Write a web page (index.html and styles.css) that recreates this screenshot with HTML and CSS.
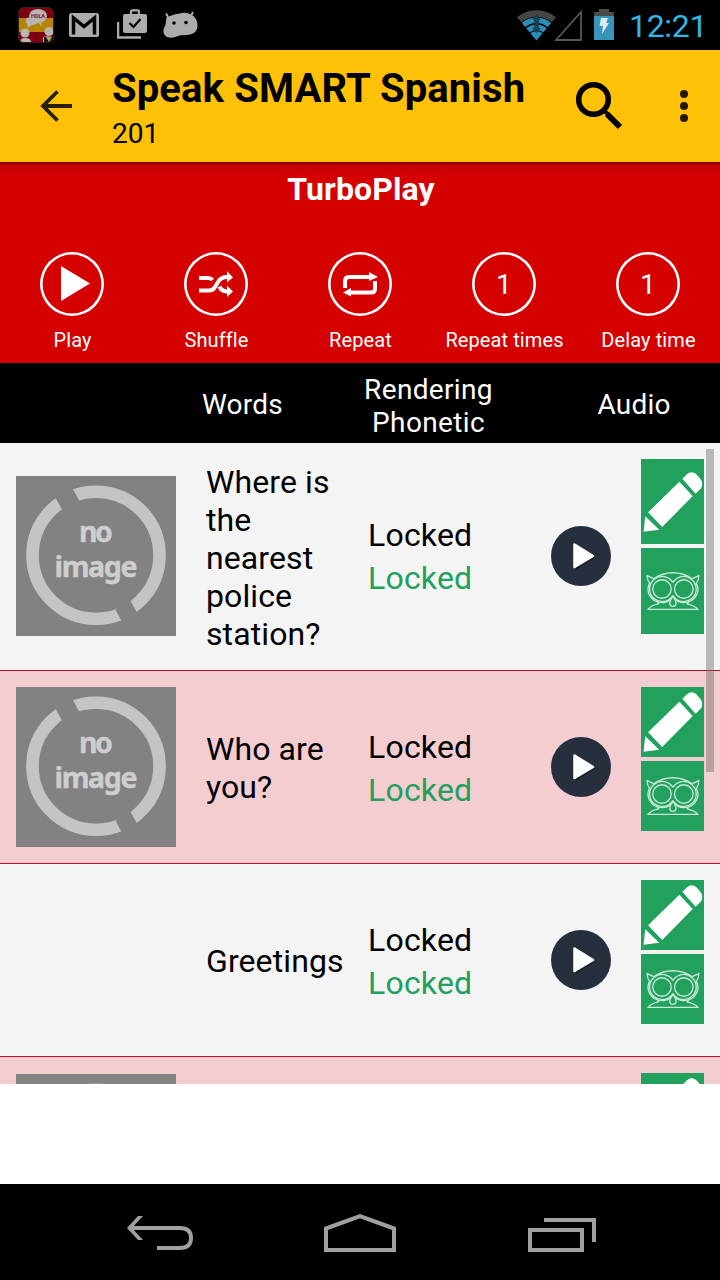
FILE: index.html
```html
<!DOCTYPE html>
<html lang="en">
<head>
<meta charset="utf-8">
<title>Speak SMART Spanish</title>
<link rel="stylesheet" href="styles.css">
</head>
<body>
<svg class="defs" width="0" height="0" aria-hidden="true">
  <defs>
    <symbol id="pencil" viewBox="0 0 64 70">
      <g fill="#fff">
        <path d="M39 14.500 7.200 45.500 21.500 60.300 52.500 29Z"/>
        <path d="M42 11.500 46.500 7Q51 3 56 6.500L60 11Q64 16 61 21L55.500 26.500Z"/>
        <path d="M4.300 49.500 2.600 65.300 18.500 63.300Z"/>
      </g>
    </symbol>
    <symbol id="owl" viewBox="0 0 64 70">
      <g fill="none" stroke="#c9ead6" stroke-width="1.350" stroke-linejoin="round">
        <circle cx="21.300" cy="33" r="9.400"/><circle cx="43.500" cy="33" r="9.400"/>
        <path d="M32.400 26.300A12.800 12.800 0 1 0 32.400 39.700A12.800 12.800 0 1 0 32.400 26.300"/>
        <path d="M13 22.500Q21.500 16.500 32.400 16.500T52 22.500"/>
        <path d="M13 22.500 6.200 19.300Q6.300 24.500 8.700 27.300Q5.500 33.500 8.500 39Q13 47.500 23 46.800Q28 46.300 30.300 42.500M52 22.500 58.800 19.300Q58.700 24.500 56.200 27.300Q59.500 33.500 56.500 39Q52 47.500 42 46.800Q37 46.300 34.600 42.500"/>
        <path d="M32.400 40.800Q29.200 45 29.200 47.500Q29.300 50.700 32.400 50.700T35.600 47.500Q35.600 45 32.400 40.800Z"/>
        <path d="M16.500 46.500 18 48Q10 49.500 7 53.700H58Q54 49.500 46.800 48L48.500 46.500"/>
      </g>
    </symbol>
    <symbol id="noimage" viewBox="0 0 160 160">
      <rect width="160" height="160" fill="#828282"/>
      <circle cx="80" cy="79.200" r="63.500" fill="none" stroke="#c4c4c4" stroke-width="12.600"/>
      <path d="M53.500 7 63.800 25.600 46.400 34.300 34.500 12.500ZM114 124 125 144 108.500 150.500 99.500 133.700Z" fill="#828282"/>
      <g class="noimage-text" text-anchor="middle"><text x="80" y="65.500" textLength="34">no</text><text x="80" y="101" textLength="83">image</text></g>
    </symbol>
    <symbol id="playdisc" viewBox="0 0 60 60">
      <circle cx="30" cy="30" r="30" fill="#272f3f"/>
      <path d="M24 20 44 31.500 25 44Z" fill="#171d2b"/>
      <path d="M23.500 18.500 42 30 23.500 41Z" fill="#fff" stroke="#fff" stroke-width="2.500" stroke-linejoin="round"/>
    </symbol>
  </defs>
</svg>
<div class="screen">
  <div class="status">
    <div class="notifications">
      <svg width="36" height="36" viewBox="0 0 36 36">
        <defs><clipPath id="app"><rect x=".5" y=".5" width="35" height="35" rx="5"/></clipPath></defs>
        <g clip-path="url(#app)"><path fill="#7e0010" d="M0 0h36v36H0z"/><path fill="#b48308" d="M0 11h36v14H0z"/>
        <g fill="#b8b4b2"><ellipse cx="20" cy="9" rx="9" ry="7"/><path d="M13 11Q8 9 8 14Q8 17 10 18L9 21 14 18Q18 18 20 15L24 20 23 14Z"/><circle cx="7" cy="26" r="4.500"/><circle cx="31" cy="24.500" r="4.500"/><path d="M2 36Q2 31 7 31T13 34V36ZM25 30Q31 28 36 31V36H25Z"/></g>
        <path d="M26 30H36V36H26Z" fill="#171512"/><path d="m28 30 3 5 3-5z" fill="#b7a767"/></g>
        <rect x=".5" y=".5" width="35" height="35" rx="5" fill="none" stroke="#38201c"/>
        <text class="hola" x="13" y="11" textLength="14">HOLA</text>
      </svg>
      <svg width="30" height="25" viewBox="0 0 30 25"><rect width="30" height="24" rx="2.500" fill="#acacac"/><path d="M4.500 21.500V5L15 13.500 25.500 5V21.500" fill="none" stroke="#000" stroke-width="3.500"/></svg>
      <svg width="30" height="30" viewBox="0 0 30 30"><path d="M1 13V28.500H24" fill="none" stroke="#acacac" stroke-width="2.500"/><rect x="6" y="5" width="24" height="19" rx="2" fill="#acacac"/><path d="M14 5V2.500Q14 1.300 15.500 1.300H20.500Q22 1.300 22 2.500V5" fill="none" stroke="#acacac" stroke-width="2.200"/><path d="m12.500 14 4 4 7-8" fill="none" stroke="#000" stroke-width="2.200"/></svg>
      <svg width="36" height="28" viewBox="0 0 36 28"><path d="M5 6 3 2.500M28 5 30 1" stroke="#acacac" stroke-width="2"/><path d="M4 6Q12 2.500 21 1.800Q29 2 33 8Q36 15 33 20Q30 24 22 24Q17 24 15 25Q9 28 4 26Q-1 23 1 17Q3 14 3 10Q3 8 4 6Z" fill="#acacac"/><circle cx="11" cy="12" r="1.800"/><circle cx="23" cy="11.500" r="1.800"/></svg>
    </div>
    <div class="system">
      <svg width="39" height="32" viewBox="0 0 39 32">
        <defs><clipPath id="fan"><path d="M19.500 31.500-1 7V0H40V7Z"/></clipPath></defs>
        <g clip-path="url(#fan)" fill="none" stroke="#2b8eb7">
          <circle cx="19.500" cy="31.500" r="27" stroke="#454545" stroke-width="6.500"/>
          <circle cx="19.500" cy="31.500" r="20.300" stroke-width="5.500"/>
          <circle cx="19.500" cy="31.500" r="13.300" stroke-width="5.500"/>
          <circle cx="19.500" cy="31.500" r="4.700" stroke-width="9.400"/>
        </g>
        <path d="m19.500 5 4.500 6h-2v8h2l-4.500 5-4.500-5h2v-8H15z" fill="#153b4a" fill-opacity=".85"/>
      </svg>
      <svg class="signal" width="28" height="32" viewBox="0 0 28 32"><path d="M2 31 27 3V31Z" fill="none" stroke="#575757" stroke-width="1.800"/></svg>
      <svg class="battery" width="20" height="31" viewBox="0 0 20 31"><path d="M0 3H5V0H15V3H20V7H0Z" fill="#4a4a4a"/><path d="M0 7H20V31H0Z" fill="#3994bb"/><path d="M7 9H14L12 14H15L8 25 9 17H5.500Z" fill="#dceef5"/></svg>
      <span class="clock">12:21</span>
    </div>
  </div>

  <header class="appbar">
    <svg width="32" height="32" viewBox="0 0 32 32" fill="none" stroke="#282005" stroke-width="3.800"><path d="M17.500 1.500 3 16 17.500 30.500M3 16H32"/></svg>
    <div class="heading"><h1>Speak SMART Spanish</h1><p>201</p></div>
    <svg class="search" width="47" height="48" viewBox="0 0 47 48" fill="none" stroke="#000"><circle cx="17.500" cy="17.500" r="14.800" stroke-width="5.500"/><path d="m28 29 4 3" stroke-width="4"/><path d="m31 32 13 13" stroke-width="6"/></svg>
    <svg class="more" width="8" height="32" viewBox="0 0 8 32" fill="#211a02"><circle cx="4" cy="4" r="4"/><circle cx="4" cy="16" r="4"/><circle cx="4" cy="28" r="4"/></svg>
  </header>

  <section class="turbo">
    <h2>TurboPlay</h2>
    <div class="controls">
      <div class="control"><div class="ring"><svg width="64" height="64" viewBox="0 0 64 64"><path d="M21 14 50 31.500 21 49Z" fill="#fff"/></svg></div><span>Play</span></div>
      <div class="control"><div class="ring"><svg width="64" height="64" viewBox="0 0 64 64"><g fill="none" stroke="#fff" stroke-width="4"><path d="M15 38.500H25Q29 38.500 31 35L34 30Q37 25 43 25H45M15 26H24Q27 26 28.500 28M35.500 34.500Q37 39 43 39.500H45"/></g><path d="m43 19 6 6.500-6 5zM43 33.500l6 6-6 5.500z" fill="#fff"/></svg></div><span>Shuffle</span></div>
      <div class="control"><div class="ring"><svg width="64" height="64" viewBox="0 0 64 64"><path d="M17 36V29Q17 25 21 25H43M47 29V37Q47 40.500 43 40.500H22" fill="none" stroke="#fff" stroke-width="4"/><path d="m41 20 9 5-9 4zM23 36l-8 4.500 8 4z" fill="#fff"/></svg></div><span>Repeat</span></div>
      <div class="control"><div class="ring number">1</div><span>Repeat times</span></div>
      <div class="control"><div class="ring number">1</div><span>Delay time</span></div>
    </div>
  </section>

  <div class="columns"><span class="c-words">Words</span><span class="c-phonetic">Rendering<br>Phonetic</span><span class="c-audio">Audio</span></div>

  <main class="list">
    <div class="row tall">
      <svg class="thumb"><use href="#noimage"/></svg>
      <p class="words">Where is<br>the<br>nearest<br>police<br>station?</p>
      <p class="phonetic">Locked<br><span>Locked</span></p>
      <svg class="play"><use href="#playdisc"/></svg>
      <div class="tools"><div class="tool"><svg><use href="#pencil"/></svg></div><div class="tool"><svg><use href="#owl"/></svg></div></div>
    </div>
    <div class="row pink">
      <svg class="thumb"><use href="#noimage"/></svg>
      <p class="words">Who are<br>you?</p>
      <p class="phonetic">Locked<br><span>Locked</span></p>
      <svg class="play"><use href="#playdisc"/></svg>
      <div class="tools"><div class="tool"><svg><use href="#pencil"/></svg></div><div class="tool"><svg><use href="#owl"/></svg></div></div>
    </div>
    <div class="row">
      <div class="thumb"></div>
      <p class="words">Greetings</p>
      <p class="phonetic">Locked<br><span>Locked</span></p>
      <svg class="play"><use href="#playdisc"/></svg>
      <div class="tools"><div class="tool"><svg><use href="#pencil"/></svg></div><div class="tool"><svg><use href="#owl"/></svg></div></div>
    </div>
    <div class="row pink partial">
      <svg class="thumb"><use href="#noimage"/></svg>
      <div class="tools"><div class="tool"><svg><use href="#pencil"/></svg></div></div>
    </div>
    <div class="scrollbar"></div>
  </main>
  <div class="blank"></div>
  <nav class="navbar">
    <svg width="68" height="40" viewBox="0 0 68 40" fill="none" stroke="#a0a0a0" stroke-width="4"><path d="M3 14H53Q64 14 64 24T53 34H30"/><path d="M0 14 11 2H16L5 14 16 26H11Z" fill="#a0a0a0" stroke="none"/></svg>
    <svg width="72" height="40" viewBox="0 0 72 40" fill="none" stroke="#a0a0a0" stroke-width="4"><path d="M2 36V14.500L36 2.200 70 14.500V36Z"/></svg>
    <svg width="68" height="40" viewBox="0 0 68 40" fill="none" stroke="#a0a0a0" stroke-width="4"><path d="M2 16H54V36H2ZM16 6H66V28"/></svg>
  </nav>
</div>
</body>
</html>
```

FILE: styles.css
```css
* { box-sizing: border-box; }
body { margin: 0; font-family: Roboto, "Noto Sans", sans-serif; }
h1, h2, p { margin: 0; }
svg { display: block; flex: none; }
.defs { position: absolute; }
.screen { width: 720px; height: 1280px; display: flex; flex-direction: column; overflow: hidden; background: #fff; }
.screen > * { flex: none; }

.status { height: 50px; background: #000; display: flex; justify-content: space-between; padding: 0 13px 0 18px; }
.notifications { display: flex; align-items: center; gap: 15px; }
.notifications svg:nth-child(3) { margin: -2px 0 0 3px; }
.notifications svg:nth-child(4) { margin: -1px 0 0 1px; }
.hola { font: bold 5.5px Roboto, sans-serif; fill: #86101b; }
.system { display: flex; align-items: center; }
.signal { margin-left: -2px; }
.battery { margin: -1px 0 0 12px; }
.clock { width: 78px; margin: 1px 0 0 15px; color: #33b5e5; font-size: 32px; line-height: 38px; letter-spacing: -0.3px; white-space: nowrap; }

.appbar { height: 112px; background: #ffc107; display: flex; align-items: center; padding: 0 32px 0 40px; }
.heading { width: 464px; margin-left: 40px; align-self: flex-start; padding-top: 15px; white-space: nowrap; }
.heading h1 { font-size: 40px; line-height: 47px; font-weight: 700; letter-spacing: .12px; }
.heading p { font-size: 28px; line-height: 33px; margin-top: 5px; }
.more { margin-left: auto; }

.turbo { height: 201px; color: #fff; background: linear-gradient(#6b0000 0, #b40000 2px, #c60000 4px, #d50000 14px); padding-top: 8px; }
.turbo h2 { font-size: 32px; line-height: 38px; text-align: center; padding-left: 2px; letter-spacing: .1px; }
.controls { display: grid; grid-template-columns: repeat(5, 144px); margin-top: 43px; }
.control { display: flex; flex-direction: column; align-items: center; font-size: 20px; line-height: 24px; gap: 12px; white-space: nowrap; letter-spacing: .1px; }
.ring { width: 64px; height: 64px; border-radius: 50%; box-shadow: inset 0 0 0 2.6px #fff; margin-top: 1px; display: flex; align-items: center; justify-content: center; font-size: 28px; }
.number { padding-top: 1px; }
.control span { padding-left: 1px; }

.columns { height: 80px; background: #000; color: #fff; display: grid; grid-template-columns: 202px 162px 130px 103px 75px; align-items: center; padding-top: 4px; font-size: 28px; line-height: 33px; letter-spacing: .2px; text-align: center; }
.c-words { grid-column: 2; justify-self: start; margin-top: -1px; }
.c-phonetic { grid-column: 3; margin: 1px 0 0 -1px; letter-spacing: .35px; }
.c-audio { grid-column: 5; margin: -1px 0 0 -1px; }

.list { position: relative; height: 641px; overflow: hidden; background: #f4f4f4; }
.row { height: 193px; padding: 0 16px; border-bottom: 1px solid #c8102a; background: #f4f4f4; display: grid; grid-template-columns: 160px 30px 162px 183px 90px 63px; align-items: center; font-size: 32px; line-height: 38px; letter-spacing: .1px; white-space: nowrap; }
.row.tall { height: 228px; padding-bottom: 1px; }
.row.pink { background: #f4cdd1; }
.thumb { width: 160px; height: 160px; grid-column: 1; }
.words { grid-column: 3; padding-top: 2px; }
.tall .words { padding-top: 4px; }
.phonetic { grid-column: 4; line-height: 43px; padding-top: 2px; letter-spacing: .2px; }
.pink .phonetic, .row:not(.tall) .phonetic { padding-top: 3px; }
.phonetic span { color: #22a05d; }
.play { width: 60px; height: 60px; grid-column: 5; }
.tools { grid-column: 6; align-self: start; padding-top: 16px; display: flex; flex-direction: column; gap: 4px; }
.tool { height: 70px; background: #22a05d; display: flex; align-items: center; }
.tall .tool { height: 85px; }
.tall .tool + .tool { height: 86px; }
.tool svg { width: 63px; height: 70px; }
.partial .thumb { align-self: start; margin-top: 17px; }
.scrollbar { position: absolute; right: 6px; top: 6px; width: 8px; height: 323px; background: rgba(100, 100, 100, .42); }
.noimage-text { font: 700 28.5px "Noto Sans", "Open Sans", sans-serif; fill: #cecece; stroke: #cecece; stroke-width: .4px; }

.blank { height: 100px; background: #fff; }
.navbar { height: 96px; background: #000; display: flex; align-items: center; justify-content: space-between; padding: 4px 124px 0 127px; }
.navbar svg:nth-child(2) { margin-left: -3px; }
```
